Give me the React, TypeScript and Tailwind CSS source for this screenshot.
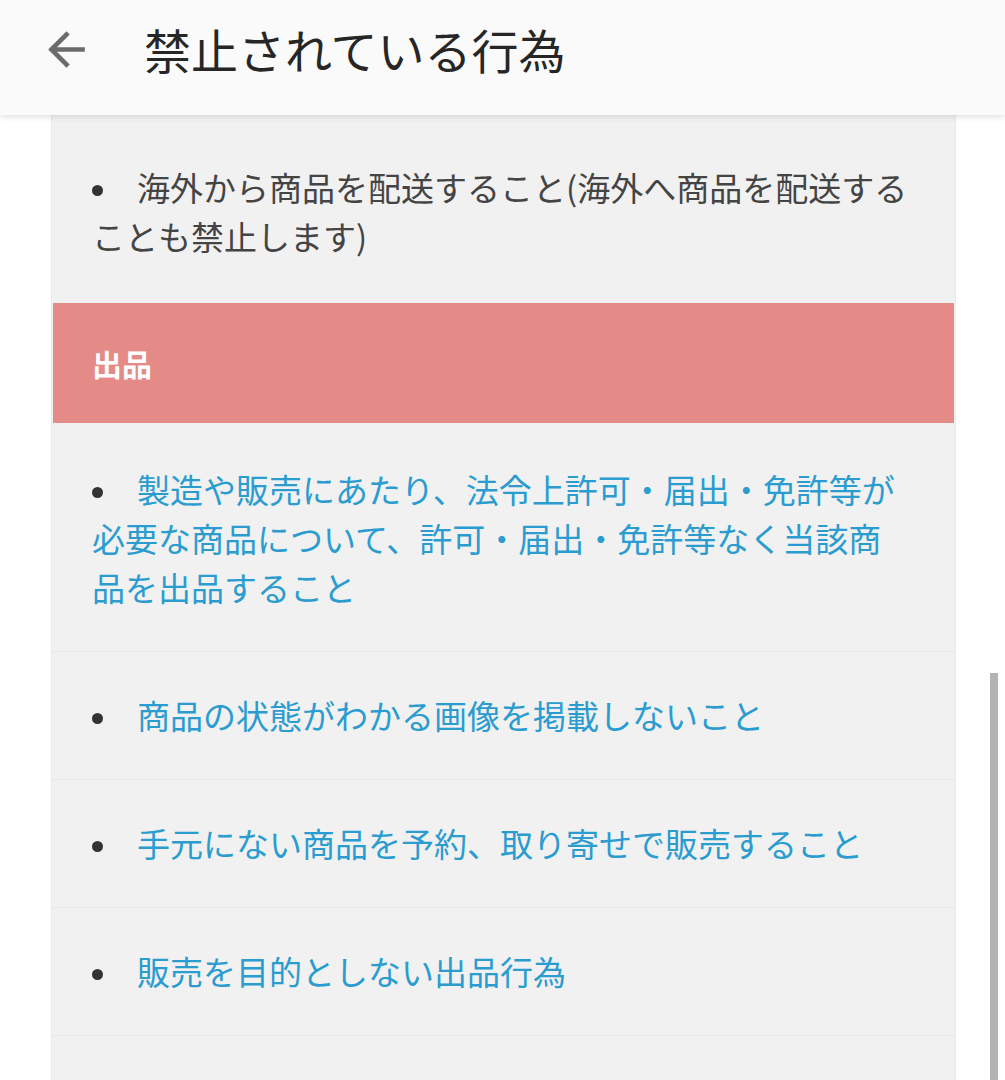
import React from 'react';

const FONT = { fontFamily: '"Noto Sans CJK JP", "Noto Sans", sans-serif' };

type Item = { text: string; link?: boolean };

const TOP_ITEMS: Item[] = [
  { text: '海外から商品を配送すること(海外へ商品を配送することも禁止します)' },
];

const LISTING_ITEMS: Item[] = [
  { text: '製造や販売にあたり、法令上許可・届出・免許等が必要な商品について、許可・届出・免許等なく当該商品を出品すること', link: true },
  { text: '商品の状態がわかる画像を掲載しないこと', link: true },
  { text: '手元にない商品を予約、取り寄せで販売すること', link: true },
  { text: '販売を目的としない出品行為', link: true },
  { text: '', link: true },
];

function Row({ item, pad }: { item: Item; pad: string }) {
  return (
    <li
      className={`pl-10 pr-[44px] text-[33px] leading-[49px] ${pad}
        ${item.link ? 'text-[#2b9cd0]' : 'text-[#444444]'}`}
    >
      {item.text && (
        <>
          <span className="inline-block w-[45px] align-middle">
            <span className="block w-[11px] h-[11px] rounded-full bg-[#333333] -mt-[4px]" />
          </span>
          {item.text}
        </>
      )}
      {!item.text && <span className="inline-block h-[49px]" />}
    </li>
  );
}

export default function App() {
  return (
    <div className="relative w-[1005px] h-[1080px] overflow-hidden bg-white" style={FONT}>
      {/* App bar */}
      <header className="relative z-10 h-[115px] pb-[16px] bg-[#fafafa] flex items-center shadow-[0_2px_6px_rgba(0,0,0,0.12)]">
        <svg width="55" height="55" viewBox="0 0 24 24" className="ml-[39px]">
          <path d="M20 11H7.83l5.59-5.59L12 4l-8 8 8 8 1.41-1.41L7.83 13H20v-2z" fill="#6b6b6b" />
        </svg>
        <h1 className="ml-[50px] text-[47px] text-[#262626] leading-none mt-[-2px]">
          禁止されている行為
        </h1>
      </header>

      {/* Content panel */}
      <div className="ml-[51px] w-[905px] bg-[#f1f1f1] border-x border-[#e9e9e9] min-h-[965px]">
        <ul>
          {TOP_ITEMS.map((it, i) => (
            <Row key={i} item={it} pad="pt-[48px] pb-[42px]" />
          ))}
        </ul>

        <div className="mx-[1px] h-[120px] bg-[#e48a87] flex items-center px-[39px]">
          <h2 className="text-white text-[30px] font-bold leading-none">出品</h2>
        </div>

        <ul>
          {LISTING_ITEMS.map((it, i) => (
            <Row
              key={i}
              item={it}
              pad={i === 0 ? 'pt-[42px] pb-[39px] border-b border-[#e8e8e8]' : 'py-[39px] border-b border-[#e8e8e8]'}
            />
          ))}
        </ul>
      </div>

      {/* Scrollbar */}
      <div className="absolute left-[990px] top-[673px] w-[8px] h-[420px] bg-[#b3b3b3]" />
    </div>
  );
}
